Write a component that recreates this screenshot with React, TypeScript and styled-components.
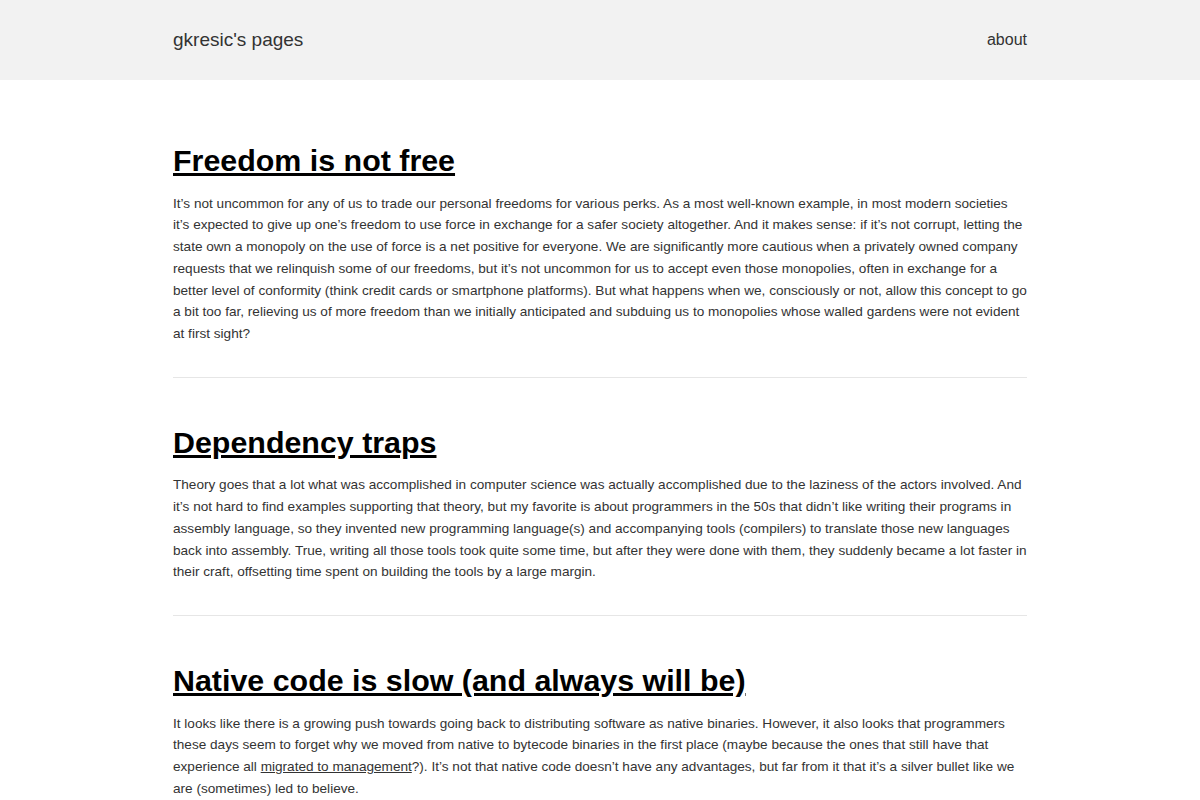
import React from "react";
import styled, { createGlobalStyle } from "styled-components";

const GlobalStyle = createGlobalStyle`
  html, body { margin: 0; padding: 0; background: #fff; }
  body { font-family: "Liberation Sans", Arial, sans-serif; color: #333; }
`;

const Header = styled.header`
  background: #f2f2f2;
  height: 80px;
`;

const HeaderInner = styled.div`
  max-width: 854px;
  height: 100%;
  margin: 0 auto;
  display: flex;
  align-items: center;
  justify-content: space-between;
`;

const SiteTitle = styled.a`
  font-size: 19px;
  color: #333;
  text-decoration: none;
`;

const NavLink = styled.a`
  font-size: 16px;
  color: #333;
  text-decoration: none;
`;

const Main = styled.main`
  max-width: 854px;
  margin: 0 auto;
  padding-top: 16px;
`;

const Article = styled.article`
  padding: 47px 0 32px;
  border-bottom: 1px solid #e6e6e6;
`;

const Title = styled.h1`
  margin: 0 0 14.5px;
  font-size: 30.4px;
  line-height: 35px;
  font-weight: bold;
  a {
    color: #000;
    text-decoration: underline;
  }
`;

const Excerpt = styled.p`
  margin: 0;
  font-size: 13.6px;
  line-height: 21.76px;
  color: #333;
  a { color: #333; text-decoration: underline; }
`;

const posts = [
  {
    title: "Freedom is not free",
    body: (
      <>
        It’s not uncommon for any of us to trade our personal freedoms for various perks. As a most well-known example, in most modern societies it’s expected to give up one’s freedom to use force in exchange for a safer society altogether. And it makes sense: if it’s not corrupt, letting the state own a monopoly on the use of force is a net positive for everyone. We are significantly more cautious when a privately owned company requests that we relinquish some of our freedoms, but it’s not uncommon for us to accept even those monopolies, often in exchange for a better level of conformity (think credit cards or smartphone platforms). But what happens when we, consciously or not, allow this concept to go a bit too far, relieving us of more freedom than we initially anticipated and subduing us to monopolies whose walled gardens were not evident at first sight?
      </>
    ),
  },
  {
    title: "Dependency traps",
    body: (
      <>
        Theory goes that a lot what was accomplished in computer science was actually accomplished due to the laziness of the actors involved. And it’s not hard to find examples supporting that theory, but my favorite is about programmers in the 50s that didn’t like writing their programs in assembly language, so they invented new programming language(s) and accompanying tools (compilers) to translate those new languages back into assembly. True, writing all those tools took quite some time, but after they were done with them, they suddenly became a lot faster in their craft, offsetting time spent on building the tools by a large margin.
      </>
    ),
  },
  {
    title: "Native code is slow (and always will be)",
    body: (
      <>
        It looks like there is a growing push towards going back to distributing software as native binaries. However, it also looks that programmers these days seem to forget why we moved from native to bytecode binaries in the first place (maybe because the ones that still have that experience all <a href="#">migrated to management</a>?). It’s not that native code doesn’t have any advantages, but far from it that it’s a silver bullet like we are (sometimes) led to believe.
      </>
    ),
  },
];

export default function App() {
  return (
    <>
      <GlobalStyle />
      <Header>
        <HeaderInner>
          <SiteTitle href="#">gkresic's pages</SiteTitle>
          <NavLink href="#">about</NavLink>
        </HeaderInner>
      </Header>
      <Main>
        {posts.map((p) => (
          <Article key={p.title}>
            <Title>
              <a href="#">{p.title}</a>
            </Title>
            <Excerpt>{p.body}</Excerpt>
          </Article>
        ))}
      </Main>
    </>
  );
}
